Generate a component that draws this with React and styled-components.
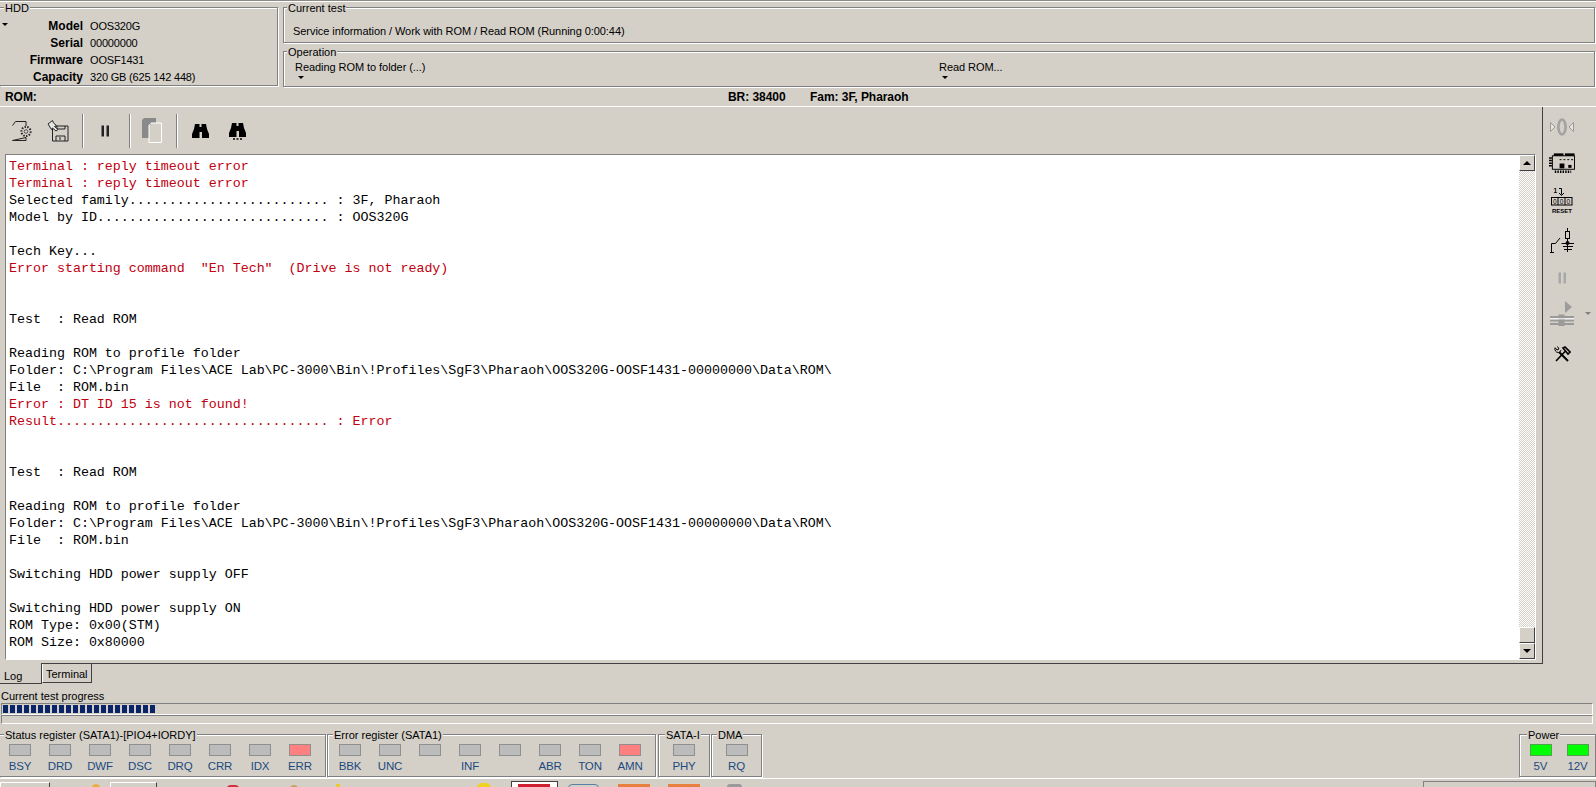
import React from "react";
import styled, { createGlobalStyle } from "styled-components";

const Global = createGlobalStyle`
  html, body { margin: 0; padding: 0; background: #d4d0c8; overflow: hidden; }
  body { font: 11px/13px "Liberation Sans", Arial, sans-serif; color: #000; }
`;

const Screen = styled.div`
  width: 1596px; height: 787px; overflow: hidden; display: flex; flex-direction: column;
  background: #d4d0c8; border-top: 1px solid #8c8a84; box-sizing: border-box;
`;
const TopRow = styled.div`
  display: grid; grid-template-columns: 278px 1fr; column-gap: 5px; height: 86px; flex: none;
  box-shadow: inset 0 1px 0 #fff; padding-right: 1px;
`;
const TopRight = styled.div`display: flex; flex-direction: column; gap: 2px;`;
const Group = styled.fieldset`
  margin: 0; padding: 0; min-width: 0; box-sizing: border-box; flex: none;
  border: 1px solid #808080;
  border-left: ${p => (p.$open ? "none" : "1px solid #808080")};
  box-shadow: 1px 1px 0 #fff, inset ${p => (p.$open ? "0" : "1px")} 1px 0 #fff;
  height: ${p => p.$h}px;
  width: ${p => (p.$w ? `${p.$w}px` : "auto")};
  margin-left: ${p => p.$ml || 0};
`;
const Title = styled.legend`
  padding: 0 1px; margin-left: ${p => p.$x ?? 3}px; font-size: 11px; line-height: 13px; background: #d4d0c8;
  position: relative; top: 1px;
`;
const HddGrid = styled.div`
  display: grid; grid-template-columns: 83px 1fr; column-gap: 7px; grid-auto-rows: 17px; padding-top: 4px; align-items: center;
`;
const HddLabel = styled.div`
  display: flex; justify-content: flex-end; align-items: center; font-weight: bold; font-size: 12px; padding-left: 2px;
`;
const HddValue = styled.div`letter-spacing: -0.18px;`;
const Caret = styled.span`
  display: block; width: 0; height: 0; flex: none;
  border-left: 3px solid transparent; border-right: 3px solid transparent; border-top: 3px solid ${p => p.$c || "#000"};
  margin: ${p => p.$m || 0};
`;
const LabelCaret = styled(Caret)`margin: -4px auto 0 0;`;
const TestLine = styled.div`padding: 11px 0 0 9px; letter-spacing: -0.06px;`;
const OpRow = styled.div`display: flex; padding: 3px 0 0 11px;`;
const OpItem = styled.div`width: 644px; display: flex; flex-direction: column; letter-spacing: -0.06px;`;
const RomBar = styled.div`
  height: 20px; flex: none; box-sizing: border-box; border-bottom: 1px solid #fff;
  display: grid; grid-template-columns: 723px 82px 1fr; padding: 4px 0 0 5px; font-weight: bold; font-size: 12px; letter-spacing: -0.05px;
`;
const Main = styled.div`display: flex; height: 557px; flex: none;`;
const Panel = styled.div`
  width: 1543px; box-sizing: border-box; border-right: 1px solid #404040; border-bottom: 1px solid #404040;
  display: flex; flex-direction: column; padding: 0 6px 3px 5px; flex: none;
`;
const Toolbar = styled.div`display: flex; align-items: center; height: 47px; flex: none; margin-left: -1px;`;
const ToolBtn = styled.div`
  width: ${p => p.$w || 36}px; height: 36px; display: flex; align-items: center; justify-content: center; flex: none;
`;
const ToolSep = styled.div`
  width: 1px; height: 34px; background: #808080; border-right: 1px solid #fff; margin: 0 3px 0 6px;
`;
const LogBox = styled.div`
  flex: 1; min-height: 0; display: flex; box-sizing: border-box; border: 1px solid; border-color: #808080 #fff #fff #808080;
  background: #fff;
`;
const LogText = styled.div`
  flex: 1; padding: 3px 0 0 3px; font: 13.33px/17px "Liberation Mono", "Courier New", monospace; white-space: pre; overflow: hidden; letter-spacing: -0.01px;
`;
const LogLine = styled.div`height: 17px; color: ${p => (p.$err ? "#c00010" : "#000")};`;
const Scrollbar = styled.div`
  width: 16px; flex: none; display: flex; flex-direction: column;
  background: repeating-conic-gradient(#d4d0c8 0 25%, #fff 0 50%) 0 0 / 2px 2px;
`;
const ScrollBtn = styled.div`
  height: 16px; box-sizing: border-box; flex: none; background: #d4d0c8; display: flex; align-items: center; justify-content: center;
  border: 1px solid; border-color: #fff #404040 #404040 #fff;
`;
const Spacer = styled.div`flex: 1;`;
const Tri = styled.span`
  width: 0; height: 0; border-left: 4px solid transparent; border-right: 4px solid transparent;
  ${p => (p.$up ? "border-bottom: 4px solid #000;" : "border-top: 4px solid #000;")}
`;
const RightBar = styled.div`width: 53px; flex: none; display: flex; flex-direction: column; padding-left: 6px; box-sizing: border-box;`;
const Slot = styled.div`height: ${p => p.$h}px; display: flex; align-items: center; flex: none;`;
const SlotIcon = styled.div`width: 26px; display: flex; justify-content: center; flex: none;`;

const Tabs = styled.div`display: flex; height: 21px; flex: none;`;
const LogTab = styled.div`
  width: 42px; height: 21px; margin-top: -1px; box-sizing: border-box; background: #d4d0c8; padding: 7px 0 0 4px;
  border-right: 1px solid #404040; border-bottom: 1px solid #404040; position: relative;
`;
const TermTab = styled.div`
  width: 50px; height: 19px; box-sizing: border-box; padding: 4px 0 0 3px;
  border-left: 1px solid #fff; border-right: 1px solid #404040; border-bottom: 1px solid #404040;
`;
const ProgressLabel = styled.div`margin: 5px 0 0 1px; height: 13px; flex: none;`;
const Track = styled.div`
  width: 1592px; margin-left: 1px; height: ${p => p.$h}px; box-sizing: border-box; flex: none; display: flex; gap: 2px;
  border: 1px solid; border-color: #808080 #fff #fff #808080; padding: 1px;
`;
const Chunk = styled.span`width: 5px; height: 100%; background: #0a246a; flex: none;`;
const Regs = styled.div`display: flex; margin-top: 4px; height: 49px; flex: none;`;
const Cells = styled.div`display: flex; padding-left: ${p => p.$pl ?? 0}px; padding-top: 3px; justify-content: ${p => (p.$c ? "center" : "flex-start")};`;
const Cell = styled.div`
  width: ${p => p.$w || 40}px; display: flex; flex-direction: column; align-items: center; flex: none;
`;
const Led = styled.div`
  width: 22px; height: 12px; box-sizing: border-box; background: ${p => p.$c || "#bcbcbc"}; border: 1px solid ${p => p.$b || "#8f8f8f"};
`;
const LedLabel = styled.div`color: #1c4a7e; font-size: 11.5px; letter-spacing: -0.15px; line-height: 14px; margin-top: 3px; height: 14px; white-space: nowrap;`;
const Strip = styled.div`
  height: 9px; margin-top: 1px; flex: none; border-top: 1px solid #fff; display: flex; align-items: flex-start;
`;
const Chip = styled.div`
  flex: none; width: ${p => p.$w}px; height: 10px; margin-left: ${p => p.$ml}px; margin-top: ${p => p.$mt}px; box-sizing: border-box;
  background: ${p => p.$bg || "#d4d0c8"}; border: ${p => p.$bd || "none"}; border-radius: ${p => p.$r || 0}px;
  ${p => p.$raised && "border-top: 1px solid #fff; border-left: 1px solid #fff; border-right: 1px solid #404040;"}
`;

const Ico = ({ w, h, children }) => (
  <svg width={w} height={h} viewBox={`0 0 ${w} ${h}`} fill="none" style={{ display: "block" }}>{children}</svg>
);

const DocGear = () => (
  <Ico w={22} h={22}>
    <path d="M1.500 5.500 4.500 1.500H15V6M15 17.500V20.500H1.500Z" stroke="#222" />
    <circle cx="15" cy="11.500" r="4.600" stroke="#222" strokeWidth="2" strokeDasharray="1.400 1.400" />
    <circle cx="15" cy="11.500" r="1.800" stroke="#555" />
  </Ico>
);
const SaveFloppy = () => (
  <Ico w={22} h={22}>
    <path d="M5.500 6H21V21H5.500Z" stroke="#222" />
    <path d="M10 6v3h8V6" stroke="#222" />
    <path d="M9 21v-5h9v5M13 17v3" stroke="#222" />
    <path d="M1 4 5.500.5l1 2.500 3 2.500-2 1 3.500 3-2 1.500-3.500-3-1 1.500Z" fill="#e8e6e0" stroke="#222" />
  </Ico>
);
const PauseIco = ({ c = "#222" }) => (
  <Ico w={9} h={12}>
    <rect x="0.500" y="0.500" width="2.500" height="11" fill={c} />
    <rect x="5.500" y="0.500" width="2.500" height="11" fill={c} />
  </Ico>
);
const CopyIco = () => (
  <Ico w={22} h={25}>
    <path d="M3 0h12v20H1V2Z" fill="#8a8a8a" />
    <path d="M10 5h10.500v19.500H8V7Z" fill="#d4d0c8" stroke="#fff" />
    <path d="M10 5 8 7h2Z" fill="#a8a8a8" />
  </Ico>
);
const Binoc = ({ dots }) => (
  <Ico w={17} h={dots ? 18 : 15}>
    <path d="M3 1h4.500v3h2V1H14l1 5 2 5v4h-7V9H7.500v6H0v-4l2-5Z" fill="#000" />
    {dots && <path d="M4 17h2M7.500 17h2M11 17h2" stroke="#000" strokeWidth="1.500" />}
  </Ico>
);
const ZIco = () => (
  <Ico w={26} h={18}>
    <ellipse cx="13" cy="9" rx="3.600" ry="7.500" stroke="#a2a2a2" strokeWidth="2.600" />
    <path d="M1.500 4.500 6 9l-4.500 4.500Z" fill="#e6e4de" stroke="#9a9a9a" />
    <path d="M24.500 4.500 20 9l4.500 4.500Z" fill="#e6e4de" stroke="#9a9a9a" />
  </Ico>
);
const CardIco = () => (
  <Ico w={27} h={21}>
    <rect x="5" y="0" width="10" height="2.500" fill="#000" />
    <rect x="16.500" y="0" width="10" height="2.500" fill="#000" />
    <rect x="3.500" y="2.500" width="23" height="14" stroke="#000" />
    <path d="M1.500 4v11" stroke="#000" strokeWidth="3" strokeDasharray="1.500 1.200" />
    <path d="M11 6.500h15" stroke="#000" strokeDasharray="2 2" />
    <rect x="11" y="10.500" width="5" height="5" fill="#000" />
    <rect x="20" y="12" width="3.400" height="3" fill="#000" />
    <path d="M6 19h17" stroke="#000" strokeWidth="2.500" strokeDasharray="1.500 1.200" />
  </Ico>
);
const ResetIco = () => (
  <Ico w={22} h={27}>
    <text x="2.500" y="5.500" fontFamily="Liberation Sans" fontSize="6.500" fontWeight="bold" fill="#000">1</text>
    <path d="M8 1.500h2.500v6M8 6l2.500 2.500L13 6" stroke="#000" />
    <rect x="0.500" y="10.500" width="20.500" height="7.500" stroke="#000" />
    <path d="M7 10.500v7.500M14 10.500v7.500" stroke="#000" />
    <text x="2" y="16.500" fontFamily="Liberation Sans" fontSize="6.500" fill="#000">0</text>
    <text x="8.800" y="16.500" fontFamily="Liberation Sans" fontSize="6.500" fill="#000">0</text>
    <text x="15.600" y="16.500" fontFamily="Liberation Sans" fontSize="6.500" fill="#000">0</text>
    <text x="1" y="26" fontFamily="Liberation Sans" fontSize="6" fontWeight="bold" fill="#000">RESET</text>
  </Ico>
);
const SwitchIco = () => (
  <Ico w={24} h={25}>
    <path d="M0 24.500h4M1.500 24.500v-9h4L10 10" stroke="#000" />
    <rect x="15.500" y="3.500" width="4" height="7" stroke="#000" />
    <path d="M17.500 0v3.500M17.500 10.500v13.500M11.500 15.500H24M13 18.500h10M14 21.500h8" stroke="#000" />
    <circle cx="17.500" cy="15" r="2" fill="#000" />
  </Ico>
);
const DiskPlay = () => (
  <Ico w={24} h={25}>
    <path d="M15 0l7 6-7 6Z" fill="#9c9c9c" />
    <path d="M0 16h24M0 19.500h24M0 23h24" stroke="#9a9a9a" strokeWidth="2" />
    <rect x="8.500" y="13.500" width="6" height="11.500" fill="#9a9a9a" />
    <path d="M0 17.800h24" stroke="#fff" />
  </Ico>
);
const Tools = () => (
  <Ico w={17} h={16}>
    <path d="M2 15 11.500 5M9 2l2-1 5 5-2 2Z" stroke="#000" strokeWidth="1.600" />
    <path d="M14 15 5 6" stroke="#000" strokeWidth="2" />
    <path d="M1 1.500 3 4l2-1-1.500-2.500M1 2c-.500 2 .500 4.500 3.500 4.500 1.500 0 2-1 2.500-2.500" stroke="#000" />
  </Ico>
);

const E = true;
const lines = [
  ["Terminal : reply timeout error", E],
  ["Terminal : reply timeout error", E],
  ["Selected family......................... : 3F, Pharaoh"],
  ["Model by ID............................. : OOS320G"],
  [""],
  ["Tech Key..."],
  ['Error starting command  "En Tech"  (Drive is not ready)', E],
  [""], [""],
  ["Test  : Read ROM"],
  [""],
  ["Reading ROM to profile folder"],
  ["Folder: C:\\Program Files\\ACE Lab\\PC-3000\\Bin\\!Profiles\\SgF3\\Pharaoh\\OOS320G-OOSF1431-00000000\\Data\\ROM\\"],
  ["File  : ROM.bin"],
  ["Error : DT ID 15 is not found!", E],
  ["Result.................................. : Error", E],
  [""], [""],
  ["Test  : Read ROM"],
  [""],
  ["Reading ROM to profile folder"],
  ["Folder: C:\\Program Files\\ACE Lab\\PC-3000\\Bin\\!Profiles\\SgF3\\Pharaoh\\OOS320G-OOSF1431-00000000\\Data\\ROM\\"],
  ["File  : ROM.bin"],
  [""],
  ["Switching HDD power supply OFF"],
  [""],
  ["Switching HDD power supply ON"],
  ["ROM Type: 0x00(STM)"],
  ["ROM Size: 0x80000"],
];

const hdd = [["Model", "OOS320G"], ["Serial", "00000000"], ["Firmware", "OOSF1431"], ["Capacity", "320 GB (625 142 448)"]];
const RED = "#ff8080";
const status = [["BSY"], ["DRD"], ["DWF"], ["DSC"], ["DRQ"], ["CRR"], ["IDX"], ["ERR", RED]];
const errors = [["BBK"], ["UNC"], [""], ["INF"], [""], ["ABR"], ["TON"], ["AMN", RED]];

const Indicators = ({ items, pl, w, c }) => (
  <Cells $pl={pl} $c={c}>
    {items.map(([l, col, b], i) => (
      <Cell key={i} $w={w}>
        <Led $c={col} $b={b} />
        <LedLabel>{l}</LedLabel>
      </Cell>
    ))}
  </Cells>
);

export default function App() {
  return (
    <Screen>
      <Global />
      <TopRow>
        <Group $h={85} $open>
          <Title $x={4}>HDD</Title>
          <HddGrid>
            {hdd.map(([k, v], i) => (
              <React.Fragment key={k}>
                <HddLabel>{i === 0 && <LabelCaret />}{k}</HddLabel>
                <HddValue>{v}</HddValue>
              </React.Fragment>
            ))}
          </HddGrid>
        </Group>
        <TopRight>
          <Group $h={42}>
            <Title>Current test</Title>
            <TestLine>Service information / Work with ROM / Read ROM (Running 0:00:44)</TestLine>
          </Group>
          <Group $h={42}>
            <Title>Operation</Title>
            <OpRow>
              <OpItem>Reading ROM to folder (...)<Caret $m="2px 0 0 3px" /></OpItem>
              <OpItem>Read ROM...<Caret $m="2px 0 0 3px" /></OpItem>
            </OpRow>
          </Group>
        </TopRight>
      </TopRow>
      <RomBar><span>ROM:</span><span>BR: 38400</span><span>Fam: 3F, Pharaoh</span></RomBar>
      <Main>
        <Panel>
          <Toolbar>
            <ToolBtn><DocGear /></ToolBtn>
            <ToolBtn><SaveFloppy /></ToolBtn>
            <ToolSep />
            <ToolBtn><PauseIco /></ToolBtn>
            <ToolSep />
            <ToolBtn><CopyIco /></ToolBtn>
            <ToolSep />
            <ToolBtn $w={38}><Binoc /></ToolBtn>
            <ToolBtn><Binoc dots /></ToolBtn>
          </Toolbar>
          <LogBox>
            <LogText>
              {lines.map(([t, err], i) => <LogLine key={i} $err={err}>{t}</LogLine>)}
            </LogText>
            <Scrollbar>
              <ScrollBtn><Tri $up /></ScrollBtn>
              <Spacer />
              <ScrollBtn />
              <ScrollBtn><Tri /></ScrollBtn>
            </Scrollbar>
          </LogBox>
        </Panel>
        <RightBar>
          <Slot $h={40}><SlotIcon><ZIco /></SlotIcon></Slot>
          <Slot $h={32}><SlotIcon><CardIco /></SlotIcon></Slot>
          <Slot $h={43}><SlotIcon><ResetIco /></SlotIcon></Slot>
          <Slot $h={36}><SlotIcon><SwitchIco /></SlotIcon></Slot>
          <Slot $h={40}><SlotIcon><PauseIco c="#a8a8a8" /></SlotIcon></Slot>
          <Slot $h={30}><SlotIcon><DiskPlay /></SlotIcon><Caret $c="#808080" $m="0 0 0 10px" /></Slot>
          <Slot $h={51}><SlotIcon><Tools /></SlotIcon></Slot>
        </RightBar>
      </Main>
      <Tabs>
        <LogTab>Log</LogTab>
        <TermTab>Terminal</TermTab>
      </Tabs>
      <ProgressLabel>Current test progress</ProgressLabel>
      <Track $h={12}>
        {Array.from({ length: 22 }, (_, i) => <Chunk key={i} />)}
      </Track>
      <Track $h={9} />
      <Regs>
        <Group $h={49} $w={326} $open>
          <Title $x={4}>Status register (SATA1)-[PIO4+IORDY]</Title>
          <Indicators items={status} />
        </Group>
        <Group $h={49} $w={329} $ml="1px">
          <Title $x={5}>Error register (SATA1)</Title>
          <Indicators items={errors} pl={2} />
        </Group>
        <Group $h={49} $w={52} $ml="2px">
          <Title $x={6}>SATA-I</Title>
          <Indicators items={[["PHY"]]} c />
        </Group>
        <Group $h={49} $w={51} $ml="1px">
          <Title $x={5}>DMA</Title>
          <Indicators items={[["RQ"]]} c />
        </Group>
        <Group $h={49} $w={77} $ml="auto">
          <Title $x={7}>Power</Title>
          <Indicators items={[["5V", "#00ff00", "#52a052"], ["12V", "#00ff00", "#52a052"]]} w={37} pl={2} />
        </Group>
      </Regs>
      <Strip>
        <Chip $w={50} $ml={0} $mt={3} $raised />
        <Chip $w={8} $ml={42} $mt={5} $bg="#e8b040" $r={4} />
        <Chip $w={47} $ml={10} $mt={3} $raised />
        <Chip $w={14} $ml={69} $mt={6} $bg="#d0303a" $r={7} />
        <Chip $w={8} $ml={50} $mt={6} $bg="#c8a060" $r={4} />
        <Chip $w={4} $ml={38} $mt={5} $bg="#f0c830" />
        <Chip $w={14} $ml={137} $mt={4} $bg="#f0d020" $r={5} />
        <Chip $w={47} $ml={20} $mt={2} $bg="#fff" $bd="1px solid #404040" />
        <Chip $w={32} $ml={-40} $mt={5} $bg="#d02030" />
        <Chip $w={31} $ml={18} $mt={5} $bd="1px solid #5a80a8" $r={4} />
        <Chip $w={32} $ml={19} $mt={5} $bg="#e88040" />
        <Chip $w={32} $ml={18} $mt={5} $bg="#e88040" />
        <Chip $w={15} $ml={27} $mt={5} $bg="#9a9a9a" $r={3} />
        <Chip $w={173} $ml={681} $mt={2} $bd="1px solid #808080" />
      </Strip>
    </Screen>
  );
}
